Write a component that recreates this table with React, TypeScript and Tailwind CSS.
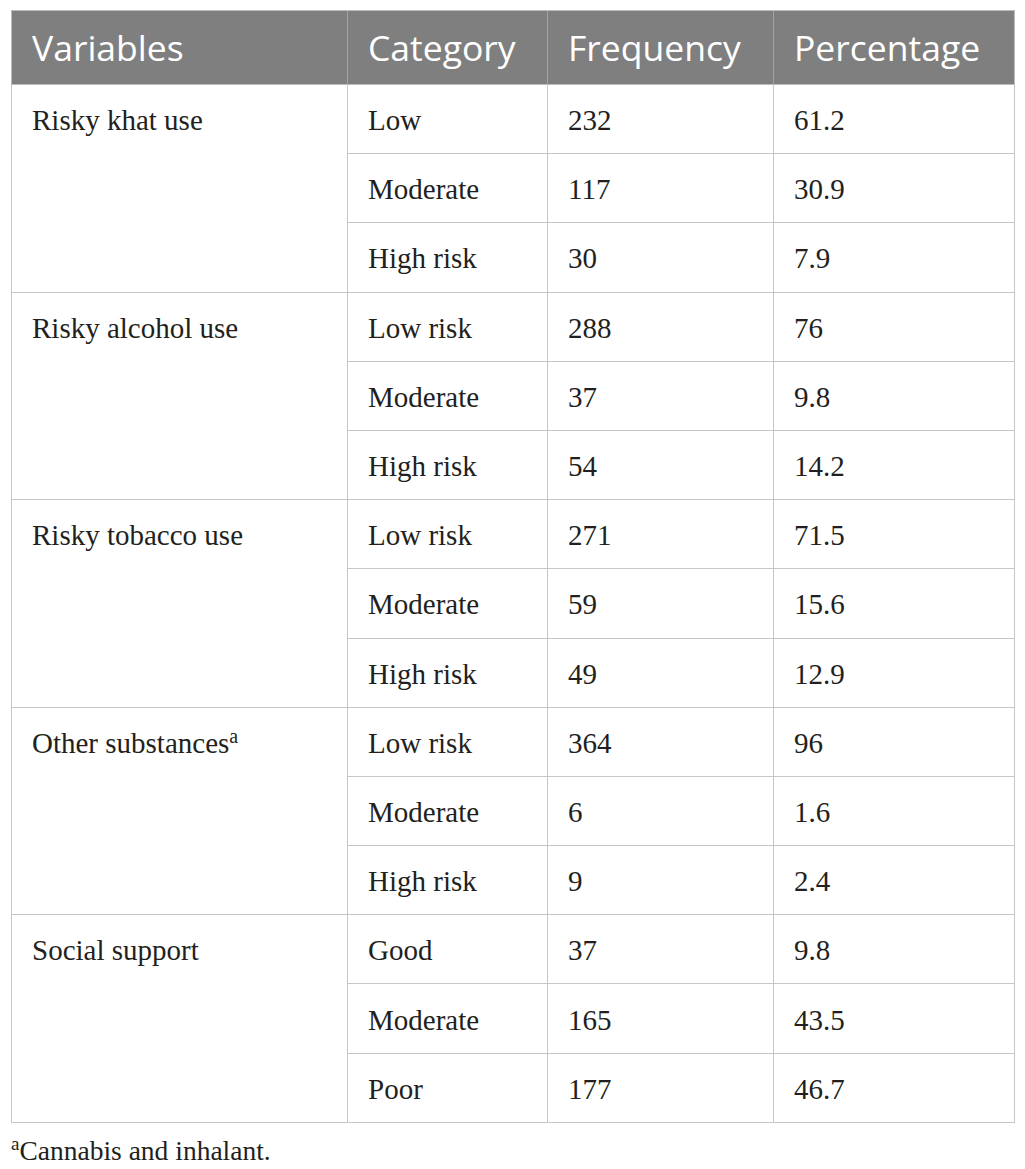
type Row = {
  variable: string;
  note?: boolean;
  items: [string, string, string][];
};

const rows: Row[] = [
  {
    variable: "Risky khat use",
    items: [
      ["Low", "232", "61.2"],
      ["Moderate", "117", "30.9"],
      ["High risk", "30", "7.9"],
    ],
  },
  {
    variable: "Risky alcohol use",
    items: [
      ["Low risk", "288", "76"],
      ["Moderate", "37", "9.8"],
      ["High risk", "54", "14.2"],
    ],
  },
  {
    variable: "Risky tobacco use",
    items: [
      ["Low risk", "271", "71.5"],
      ["Moderate", "59", "15.6"],
      ["High risk", "49", "12.9"],
    ],
  },
  {
    variable: "Other substances",
    note: true,
    items: [
      ["Low risk", "364", "96"],
      ["Moderate", "6", "1.6"],
      ["High risk", "9", "2.4"],
    ],
  },
  {
    variable: "Social support",
    items: [
      ["Good", "37", "9.8"],
      ["Moderate", "165", "43.5"],
      ["Poor", "177", "46.7"],
    ],
  },
];

const cell = "h-[69.2px] border border-[#c6c6c6] pl-[20px] align-middle pt-[3px]";

export default function App() {
  return (
    <div className="min-h-[1169px] w-[1025px] bg-white pt-[10px] pl-[11px] text-[#231f20] font-['Liberation_Serif',serif]">
      <table className="w-[1003px] table-fixed border-collapse">
        <colgroup>
          <col className="w-[336px]" />
          <col className="w-[200px]" />
          <col className="w-[226px]" />
          <col className="w-[241px]" />
        </colgroup>
        <thead>
          <tr className="bg-[#7f7f7f] text-white font-['Open_Sans',sans-serif] text-[35.5px] leading-none">
            {["Variables", "Category", "Frequency", "Percentage"].map((h, i) => (
              <th
                key={h}
                className={`h-[74px] border-y border-[#bcbcbc] pl-[20px] text-left font-normal ${
                  i === 0 ? "border-l" : "border-l border-l-[#a2a2a2]"
                } ${i === 3 ? "border-r border-r-[#bcbcbc]" : ""}`}
              >
                {h}
              </th>
            ))}
          </tr>
        </thead>
        <tbody className="text-[29px] leading-none">
          {rows.map((r) =>
            r.items.map((it, j) => (
              <tr key={r.variable + it[0]}>
                {j === 0 && (
                  <td rowSpan={3} className="border border-[#c6c6c6] pl-[20px] pt-[21px] align-top">
                    {r.variable}
                    {r.note && <sup className="text-[20px]">a</sup>}
                  </td>
                )}
                <td className={cell}>{it[0]}</td>
                <td className={cell}>{it[1]}</td>
                <td className={cell}>{it[2]}</td>
              </tr>
            ))
          )}
        </tbody>
      </table>
      <p className="mt-[14px] text-[27.5px] leading-none">
        <sup className="text-[19px]">a</sup>Cannabis and inhalant.
      </p>
    </div>
  );
}
